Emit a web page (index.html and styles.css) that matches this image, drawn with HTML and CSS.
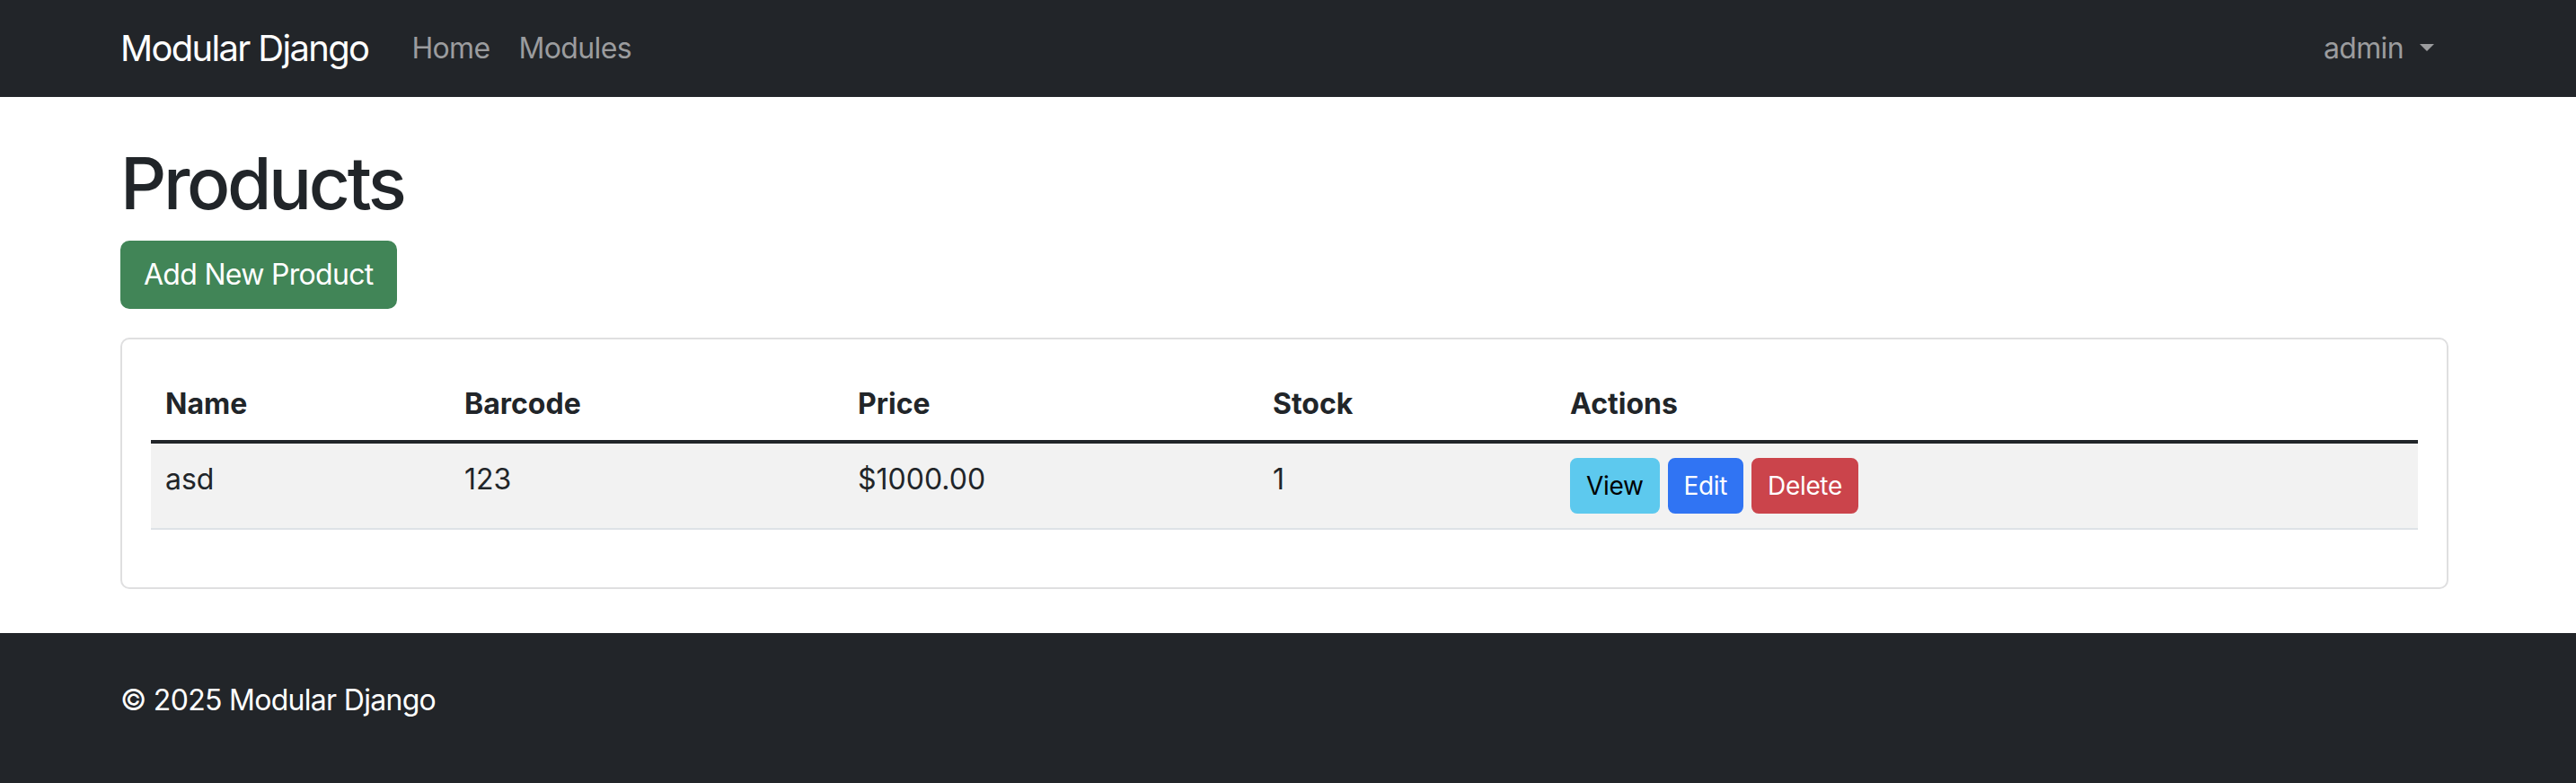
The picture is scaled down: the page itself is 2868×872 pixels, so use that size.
FILE: index.html
```html
<!DOCTYPE html>
<html lang="en">
<head>
<meta charset="utf-8">
<title>Products - Modular Django</title>
<link rel="stylesheet" href="styles.css">
</head>
<body>
<nav class="navbar">
  <div class="container nav-inner">
    <a class="brand" href="#">Modular Django</a>
    <ul class="nav-links">
      <li><a class="nav-link" href="#">Home</a></li>
      <li><a class="nav-link" href="#">Modules</a></li>
    </ul>
    <a class="nav-link user" href="#">admin<span class="caret"></span></a>
  </div>
</nav>

<main class="container main">
  <h1 class="page-title">Products</h1>
  <a class="btn btn-success btn-add" href="#">Add New Product</a>
  <div class="card">
    <div class="card-body">
      <table class="table">
        <colgroup>
          <col class="col-name">
          <col class="col-barcode">
          <col class="col-price">
          <col class="col-stock">
          <col class="col-actions">
        </colgroup>
        <thead>
          <tr>
            <th>Name</th>
            <th>Barcode</th>
            <th>Price</th>
            <th>Stock</th>
            <th>Actions</th>
          </tr>
        </thead>
        <tbody>
          <tr>
            <td>asd</td>
            <td>123</td>
            <td>$1000.00</td>
            <td>1</td>
            <td>
              <div class="actions">
                <a class="btn btn-sm btn-info" href="#">View</a>
                <a class="btn btn-sm btn-primary" href="#">Edit</a>
                <a class="btn btn-sm btn-danger" href="#">Delete</a>
              </div>
            </td>
          </tr>
        </tbody>
      </table>
    </div>
  </div>
</main>

<footer class="footer">
  <div class="container footer-text">© 2025 Modular Django</div>
</footer>
</body>
</html>
```

FILE: styles.css
```css
* {
  box-sizing: border-box;
}

body {
  margin: 0;
  font-family: Inter, "Noto Sans", "Liberation Sans", sans-serif;
  font-size: 32px;
  line-height: 1.5;
  color: #212529;
  background: #fff;
}

a {
  text-decoration: none;
}

.container {
  width: 2592px;
  margin-left: 134px;
}

/* Navbar */
.navbar {
  background: #222529;
  padding: 14px 0 14px;
}

.nav-inner {
  display: flex;
  align-items: center;
}

.brand {
  font-size: 40px;
  line-height: 60px;
  letter-spacing: -0.042em;
  padding: 10px 0;
  margin-right: 32px;
  color: #fff;
}

.nav-links {
  display: flex;
  list-style: none;
  margin: 0;
  padding: 0;
}

.nav-link {
  display: block;
  padding: 16px;
  color: #9b9c9e;
  letter-spacing: -0.02em;
}

.user {
  margin-left: auto;
}

.caret {
  display: inline-block;
  margin-left: 18px;
  vertical-align: 8px;
  border-top: 8px solid #9b9c9e;
  border-left: 8px solid transparent;
  border-right: 8px solid transparent;
}

/* Main */
.main {
  padding-top: 48px;
}

.page-title {
  font-size: 80px;
  line-height: 1.2;
  font-weight: 500;
  letter-spacing: -0.042em;
  margin: 0 0 16px;
}

.btn {
  display: inline-block;
  border: 2px solid transparent;
  color: #fff;
}

.btn-add {
  display: block;
  width: fit-content;
  padding: 12px 24px;
  font-size: 32px;
  line-height: 48px;
  letter-spacing: -0.022em;
  border-radius: 10px;
  margin-bottom: 32px;
}

.btn-success {
  background: #418557;
  border-color: #418557;
}

.card {
  border: 2px solid #dfdfe0;
  border-radius: 10px;
}

.card-body {
  padding: 32px;
}

.table {
  width: 100%;
  border-collapse: collapse;
  table-layout: fixed;
  margin-bottom: 32px;
}

.col-name { width: 333px; }
.col-barcode { width: 438px; }
.col-price { width: 462px; }
.col-stock { width: 331px; }

.table th,
.table td {
  padding: 16px;
  text-align: left;
  vertical-align: top;
}

.table th {
  font-weight: 700;
  border-bottom: 4px solid #212529;
}

.table td {
  background: #f2f2f2;
  border-bottom: 2px solid #dee2e6;
}

.actions {
  display: flex;
  gap: 9px;
}

.btn-sm {
  padding: 8px 16px;
  font-size: 28px;
  line-height: 42px;
  letter-spacing: -0.012em;
  border-radius: 8px;
}

.btn-info {
  background: #5dc9ee;
  border-color: #5dc9ee;
  color: #000;
}

.btn-primary {
  background: #3074f3;
  border-color: #3074f3;
}

.btn-danger {
  background: #cb444b;
  border-color: #cb444b;
}

/* Footer */
.footer {
  margin-top: 49px;
  background: #222529;
  color: #fff;
  padding: 51px 0 69px;
}

.footer-text {
  letter-spacing: -0.022em;
}
```
